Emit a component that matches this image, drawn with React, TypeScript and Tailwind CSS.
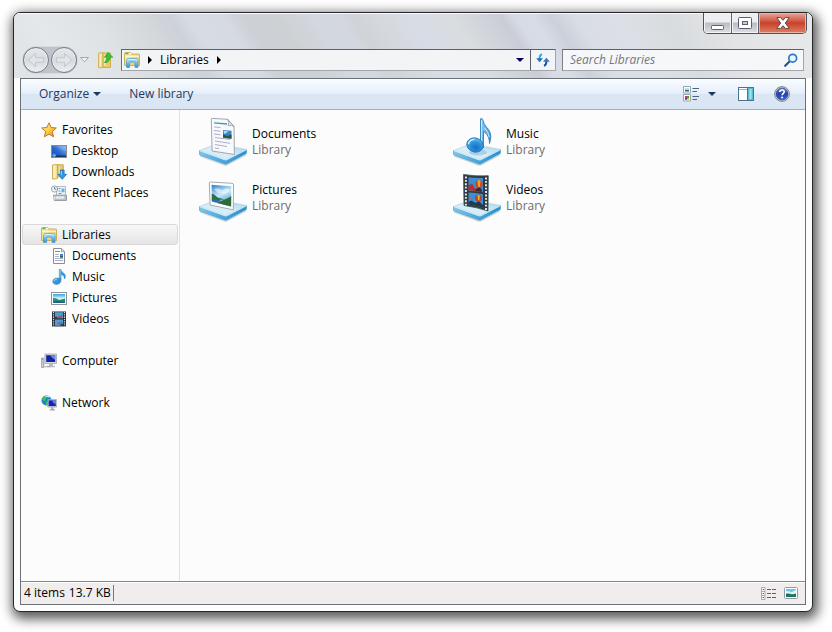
import type { ReactNode } from "react";

function LibrariesIcon() {
  return (
    <svg width="16" height="16" viewBox="0 0 16 16" aria-hidden="true">
      <defs>
        <linearGradient id="libFolder" x1="0" y1="0" x2="1" y2="1">
          <stop offset="0" stopColor="#f8efb4" />
          <stop offset="1" stopColor="#e3c763" />
        </linearGradient>
        <linearGradient id="libStand" x1="0" y1="0" x2="0" y2="1">
          <stop offset="0" stopColor="#b8e7fb" />
          <stop offset="1" stopColor="#2d95d2" />
        </linearGradient>
      </defs>
      <path d="M.5 13.5v-12q0-.9.9-.9h5.2l1 1.400h7q.9 0 .9.900v10.600z" fill="url(#libFolder)" stroke="#c3a245" strokeWidth=".8" />
      <path d="M1.400 1.500h3" stroke="#4dbb3c" strokeWidth="1.600" />
      <path d="M5 1.500h2" stroke="#fff" strokeWidth="1.200" />
      <path d="M1 4.300h14" stroke="#fffbe0" strokeWidth="1" />
      <path d="M2.500 15.400V9.200q0-2.700 2.700-2.700h6.100q2.700 0 2.700 2.700v6.200h-3v-4.100q0-1.300-1.300-1.300H6.900q-1.300 0-1.300 1.300v4.100z" fill="url(#libStand)" stroke="#4c9dca" strokeWidth=".8" />
      <path d="M3.400 9.200q0-1.800 1.900-1.800h6q1.800 0 1.800 1.800" fill="none" stroke="#e9f8ff" strokeWidth=".8" />
    </svg>
  );
}

function StarIcon() {
  return (
    <svg width="16" height="16" viewBox="0 0 16 16" aria-hidden="true">
      <defs>
        <linearGradient id="star" x1="0" y1="0" x2="1" y2="1">
          <stop offset="0" stopColor="#fffbc0" />
          <stop offset=".45" stopColor="#ffd548" />
          <stop offset="1" stopColor="#ef7f14" />
        </linearGradient>
      </defs>
      <path d="M8 .8l2.100 4.700 5.200.500-3.900 3.500 1.100 5.300L8 12 3.400 14.800l1.200-5.300L.7 6l5.200-.500z" fill="url(#star)" stroke="#b97637" strokeWidth="1" strokeLinejoin="round" />
    </svg>
  );
}

function DesktopIcon() {
  return (
    <svg width="16" height="16" viewBox="0 0 16 16" aria-hidden="true">
      <defs>
        <linearGradient id="desk" x1="0" y1="1" x2="1" y2="0">
          <stop offset="0" stopColor="#1746a3" />
          <stop offset=".45" stopColor="#2a66ce" />
          <stop offset="1" stopColor="#86bbf5" />
        </linearGradient>
      </defs>
      <rect x=".5" y="2.500" width="15" height="12" fill="url(#desk)" stroke="#868c96" />
      <path d="M1 12.500h14V14H1z" fill="#1d3563" />
      <path d="M6 3h9v5Q10 8 6 3z" fill="#fff" opacity=".15" />
      <circle cx="3" cy="12.300" r="1.800" fill="#45a5e5" />
      <path d="M2.200 11.500h1v1h-1z" fill="#ee6936" />
      <path d="M3.300 12.300h1v1h-1z" fill="#f7d644" />
    </svg>
  );
}

function DownloadsIcon() {
  return (
    <svg width="16" height="16" viewBox="0 0 16 16" aria-hidden="true">
      <path d="M1.500 1l5-.5v14l-5 .600z" fill="#efdc91" stroke="#c9af64" />
      <path d="M6.500 .8h5.800v12H6.500z" fill="#e5cb71" stroke="#c6a95a" />
      <path d="M3.500 1.500v12.500" stroke="#fbf2bd" strokeWidth="2" />
      <path d="M8.500 2v10" stroke="#f5e49e" />
      <path d="M9.400 6h3.700v4.300h2.400l-4.200 5-4.300-5h2.400z" fill="#2b9be9" stroke="#1b6db5" strokeWidth=".8" />
      <path d="M10.300 7v4" stroke="#9bd7fa" />
    </svg>
  );
}

function RecentIcon() {
  return (
    <svg width="16" height="16" viewBox="0 0 16 16" aria-hidden="true">
      <path d="M5.500 1.500h9v10h-9z" fill="#edf5fa" stroke="#b5bbbf" />
      <path d="M7.500 3.500h2M7.500 6h2M7.500 8.500h3" stroke="#7398b1" />
      <path d="M10.500 3.500h3v3.700h-3z" fill="#65b1df" />
      <path d="M2.500 10.200h13v5.200H3.300z" fill="#c1c5c8" stroke="#94999c" />
      <path d="M5 12.500h8" stroke="#edf0f2" strokeWidth="2" />
      <path d="M3 11.500l1 3" stroke="#f6f6f6" />
      <circle cx="3.600" cy="4" r="3.100" fill="#f5faff" stroke="#94a0aa" />
      <path d="M3.600 2v2.200h1.800" stroke="#4a5966" fill="none" strokeWidth=".8" />
    </svg>
  );
}

function DocumentIcon() {
  return (
    <svg width="16" height="16" viewBox="0 0 16 16" aria-hidden="true">
      <path d="M2.500.5h8.200l2.800 3v12h-11z" fill="#fff" stroke="#8c8f92" />
      <path d="M10.500.700v3h3" fill="#e8edf0" stroke="#9da0a2" />
      <path d="M4 3.500h5" stroke="#4c9aaa" />
      <path d="M4 6.500h4M4 8.500h4M4 10.500h8M4 12.500h8" stroke="#a9b0cc" />
      <path d="M9 6h3v3.500H9z" fill="#4387c6" />
      <path d="M9 8h3v1.500H9z" fill="#286452" />
    </svg>
  );
}

function MusicIcon() {
  return (
    <svg width="16" height="16" viewBox="0 0 16 16" aria-hidden="true">
      <defs>
        <linearGradient id="note" x1="0" y1="0" x2="1" y2="1">
          <stop offset="0" stopColor="#67bded" />
          <stop offset="1" stopColor="#1576bf" />
        </linearGradient>
      </defs>
      <path d="M8.300.400h1.400c.2 2.700 4.900 3.500 4.600 7.200q-.1 1.400-.8 2.300c.3-3-1.800-4-3.500-4.400v5.800c0 2.200-2 4.100-4.600 4.100-2.200 0-3.600-1.200-3.600-2.800C1.800 10.400 4 9 6.100 9q1.300 0 2.200.500z" fill="url(#note)" stroke="#267fb9" strokeWidth=".6" />
      <path d="M3 12q.7-2 3-2" fill="none" stroke="#a9e0fb" strokeWidth=".9" />
      <path d="M9 1v8" stroke="#b2dff5" strokeWidth=".7" />
    </svg>
  );
}

function PictureIcon() {
  return (
    <svg width="16" height="16" viewBox="0 0 16 16" aria-hidden="true">
      <defs>
        <linearGradient id="picSky" x1="0" y1="0" x2="0" y2="1">
          <stop offset="0" stopColor="#3b9fd8" />
          <stop offset=".5" stopColor="#d3f6fc" />
        </linearGradient>
      </defs>
      <rect x=".5" y="2.500" width="15" height="12" fill="#fff" stroke="#8d9499" />
      <path d="M2 4h12v9H2z" fill="url(#picSky)" />
      <path d="M2 8q4 0 6 2l6-1.500V13H2z" fill="#2c8d75" />
      <path d="M2 11.500q5-1 12 0V13H2z" fill="#1c628c" />
    </svg>
  );
}

function VideoIcon() {
  return (
    <svg width="16" height="16" viewBox="0 0 16 16" aria-hidden="true">
      <path d="M1 .5h14v15H1z" fill="#2a2d33" />
      <path d="M4 1.300h8v6H4zM4 8.500h8v6.200H4z" fill="#4d9edb" />
      <path d="M2.500 1v14.500M13.500 1v14.500" stroke="#d5dbe0" strokeWidth="1.200" strokeDasharray="1.300 1" />
      <path d="M7 5.500l1-1.300 1.200 1 2-2.300v3l-2 1.200H7.500zM6 12.500l1.500-1.200 1.500.8 2-2v2l-2 1.500z" fill="#b94d3d" />
      <path d="M4 7.300h3l-1-1.500H4zM12 14.700H9l1-1.500 2-.5z" fill="#213954" />
    </svg>
  );
}

function ComputerIcon() {
  return (
    <svg width="16" height="16" viewBox="0 0 16 16" aria-hidden="true">
      <path d="M.4 5h2.600v9.500H.400z" fill="#c4c7ca" stroke="#8b8f93" strokeWidth=".6" />
      <path d="M1 6.500h1" stroke="#56d13c" />
      <path d="M4 1h11.500v9.500H4z" fill="#d9dadc" stroke="#a2a5a9" strokeWidth=".8" />
      <path d="M5.200 2.200h9v6.800h-9z" fill="#1422a6" />
      <path d="M9 2.200h5.200V7Q12 6 9 2.200z" fill="#6b88e5" />
      <path d="M8 10.700h4v2h2v1.600H6v-1.600h2z" fill="#b9bcc0" />
      <path d="M3.500 13.700h6" stroke="#a7aaae" />
    </svg>
  );
}

function NetworkIcon() {
  return (
    <svg width="16" height="16" viewBox="0 0 16 16" aria-hidden="true">
      <circle cx="5.500" cy="5.500" r="5" fill="#2081cb" />
      <path d="M1 4Q2 .8 6 .700l1.600 1.600-2.400.8-.8 2.200-2 1zM5.500 6.500l2 .8-1.700 3H4.500z" fill="#43c443" />
      <path d="M4.500 1.500q2-1 4 .700" stroke="#c8f2fb" strokeWidth="1.200" fill="none" />
      <path d="M6.800 4.500h8.800v7.600H6.800z" fill="#d3d5d9" stroke="#969ca3" strokeWidth=".6" />
      <path d="M7.600 5.300h7.200v5.800H7.600z" fill="#1526b2" />
      <path d="M11 5.300h3.800v4Q12 8.500 11 5.300z" fill="#6889e9" />
      <path d="M10.200 12.200h2.200v2h1.600v1.300H8.700v-1.300h1.500z" fill="#a3a8ae" />
    </svg>
  );
}

function Tray() {
  return (
    <>
      <defs>
        <linearGradient id="trayTop" x1="0" y1="1" x2="1" y2="0">
          <stop offset="0" stopColor="#cfe8f5" />
          <stop offset=".5" stopColor="#d9eef8" />
          <stop offset="1" stopColor="#a3d0ea" />
        </linearGradient>
        <linearGradient id="traySide" x1="0" y1="0" x2="1" y2="0">
          <stop offset="0" stopColor="#7fc4e8" />
          <stop offset=".5" stopColor="#48a6db" />
          <stop offset="1" stopColor="#2b8fce" />
        </linearGradient>
      </defs>
      <path d="M1.500 38L26.500 47.500 47 37" stroke="#666" strokeWidth="1.400" opacity=".22" fill="none" />
      <path d="M.5 32.500v3.800q0 .6.700.900L26 46.200q1 .3 1.900-.1L47 35.800q.5-.3.500-.900V31.500L27 40z" fill="url(#traySide)" stroke="#4b9fcd" strokeWidth=".6" />
      <path d="M.5 32.500L18 26l29.500 5.500L27.800 41.600q-.9.400-1.800.100z" fill="url(#trayTop)" stroke="#9fcde6" strokeWidth=".6" />
      <path d="M1 32.800l25 9.100q.9.300 1.800-.1L47.200 31.900" stroke="#f1fbff" strokeWidth=".7" fill="none" />
    </>
  );
}

function BigDocument() {
  return (
    <svg width="48" height="48" viewBox="0 0 48 48" aria-hidden="true">
      <Tray />
      <path d="M12.300 1.200q-.2-.8.800-.8l15.500.900 6.400 7 .4 28.200-22.300-3.500z" fill="#f8f9fd" stroke="#999ca5" strokeWidth=".9" />
      <path d="M28.600 1.300q2 3.500.5 6.200 4-.6 5.900 1z" fill="#e3e6eb" stroke="#8b9099" strokeWidth=".7" />
      <path d="M15 4.800l13 1.200" stroke="#3e9fa2" strokeWidth="1.300" />
      <path d="M15 9l6.500.5M15 12.500l6.500.700M15 16l6.500.8M16 19.500l15 2M16 23l15 2.300M16 26.500l12 2M16 30l4 .7" stroke="#a5a6bf" strokeWidth=".9" />
      <path d="M24 12l8.500.700v8l-8.500-1z" fill="#3a84c8" />
      <path d="M24 16l4 2 4.500-1.500v4.200l-8.500-1z" fill="#285b46" />
      <path d="M24.500 12.700l5 .5-4 3z" fill="#a8def6" />
    </svg>
  );
}

function BigPicture() {
  return (
    <svg width="48" height="48" viewBox="0 0 48 48" aria-hidden="true">
      <defs>
        <linearGradient id="bigSky" x1="0" y1="0" x2=".4" y2="1">
          <stop offset="0" stopColor="#2f80cf" />
          <stop offset=".55" stopColor="#c9eafa" />
          <stop offset="1" stopColor="#4ba0d2" />
        </linearGradient>
      </defs>
      <Tray />
      <path d="M10.300 9q-.1-1 1-1L33 9.300q1.500.2 1.500 1.500l-.2 25-23.200-4.800z" fill="#fff" stroke="#9aa0a8" strokeWidth=".9" />
      <path d="M12.500 10.800l19.800 1.400-.2 20.300-19-4.500z" fill="url(#bigSky)" />
      <path d="M12.700 19.500q2.500.8 6 3.900l7 2.200-13 1z" fill="#2e704e" />
      <path d="M12.800 25l9 1-3 2.500-5.900-1z" fill="#276d9e" />
      <path d="M32.200 22q-3 2.500-7.500 4l-7 2.700 14.400 3.800z" fill="#306b36" />
      <path d="M15 15q4-2 8 1l5-2 3 2-5 4-7-1z" fill="#fff" opacity=".5" />
    </svg>
  );
}

function BigMusic() {
  return (
    <svg width="48" height="48" viewBox="0 0 48 48" aria-hidden="true">
      <defs>
        <radialGradient id="bigNote" cx=".6" cy=".65" r=".75">
          <stop offset="0" stopColor="#156fc3" />
          <stop offset=".5" stopColor="#2d94db" />
          <stop offset="1" stopColor="#8accf4" />
        </radialGradient>
        <linearGradient id="bigStem" x1="0" y1="0" x2="1" y2="1">
          <stop offset="0" stopColor="#8bcbf0" />
          <stop offset="1" stopColor="#3a93d6" />
        </linearGradient>
      </defs>
      <Tray />
      <ellipse cx="25" cy="34.500" rx="9" ry="3" fill="#5a98c5" opacity=".35" />
      <path d="M27.500.800q2-.7 2.300 1 .8 4.500 4 7.700c4.700 5 4.700 9.500 2.700 16 0-6-2.500-10-6-12v16q-1.300 2-3 2z" fill="url(#bigStem)" stroke="#327fb9" strokeWidth=".9" />
      <path d="M28.600 2v26M31.500 10q4 4 4.500 9" stroke="#cdecfc" strokeWidth="1" fill="none" />
      <ellipse cx="22" cy="27" rx="8.300" ry="7" fill="url(#bigNote)" stroke="#2478b9" strokeWidth=".9" transform="rotate(18 22 27)" />
      <path d="M15.500 26q1-4.500 6-4.600" stroke="#d5f1ff" strokeWidth="1.300" fill="none" />
    </svg>
  );
}

function BigVideo() {
  return (
    <svg width="48" height="48" viewBox="0 0 48 48" aria-hidden="true">
      <Tray />
      <path d="M10.500.500q12 2 24.800 1.200l-.3 35.300q-12-4-24-5.500z" fill="#34383e" stroke="#2b5a5c" strokeWidth=".8" />
      <path d="M15.500 3.300q7.500 1 14.500.600v14.300q-7-1.200-14.500-1.200zM15.500 18.500q7 .2 14.500 1.700v13.500q-7-2.200-14.500-3.200z" fill="#3c8ed5" />
      <path d="M12.900 2.500v29M33 3.500v33" stroke="#e5eef1" strokeWidth="1.900" strokeDasharray="1.900 1.500" />
      <circle cx="26" cy="10" r="3.700" fill="#c94729" />
      <path d="M24.500 7q1.500-2 3 0l-.6 6h-1.600z" fill="#f0a52a" />
      <path d="M15.500 10l2 1 1.500-1.500 2.500 4v3.300l-6-.2zM21 15l4-1 1 3.500-6-.5z" fill="#b92e2b" />
      <path d="M22 17q2-4 4.500-3.500t2.500 4.500z" fill="#3b2b39" />
      <circle cx="25.500" cy="24" r="3.300" fill="#b93f28" />
      <path d="M24.500 21.500q1.500-1 2.300 0l-.4 5-1.400-.2z" fill="#f1b232" />
      <path d="M15.500 28q3-2.500 5 0 3 2 5-1l4.500 4v2.700q-7-2.200-14.500-3.200z" fill="#22394c" />
      <path d="M18 22.500l1.500 1-1 2-1.500-1z" fill="#d8612b" />
    </svg>
  );
}

function UpFolderIcon() {
  return (
    <svg width="17" height="18" viewBox="0 0 17 18" aria-hidden="true">
      <path d="M1.500 2.200L6 1.500v15l-4.500.4z" fill="#f0dc8b" stroke="#d3b662" />
      <path d="M6 2h7.500v14.500H6z" fill="#e9cc6a" stroke="#cdae55" />
      <path d="M3.500 3v12M8 3.500v11" stroke="#fbf1ba" strokeWidth="1.300" />
      <path d="M11 1.500l4.800 4.700h-2.300q-.5 3.500-3.500 5.300H7.500q2.300-2 2.500-5.300H7.500z" fill="#37c42c" stroke="#2a9a30" strokeWidth=".7" />
    </svg>
  );
}

function NavCircle({ label, d }: { label: string; d: string }) {
  return (
    <button
      type="button"
      aria-label={label}
      className="size-[26px] shrink-0 rounded-full border border-[#777e88] bg-linear-to-b from-[#e6e8eb] via-[#d6dadf] to-[#eaf0f4] shadow-[inset_0_0_0_1px_#eceef0]"
    >
      <svg viewBox="0 0 24 24" className="size-full" aria-hidden="true">
        <path d={d} fill="#e3e6e9" stroke="#c2c7cd" strokeWidth="1" strokeLinejoin="round" />
      </svg>
    </button>
  );
}

function NavCircles() {
  return (
    <div className="flex shrink-0 gap-[2px] rounded-full bg-[#bfc4cb] shadow-[0_0_1px_#6e747d]">
      <NavCircle label="Back" d="M4.500 12l7-6.500v4.300h8v4.400h-8v4.300z" />
      <NavCircle label="Forward" d="M19.500 12l-7-6.500v4.300h-8v4.400h8v4.300z" />
    </div>
  );
}

function Triangle({ className, color }: { className: string; color: string }) {
  return (
    <svg viewBox="0 0 8 4" className={className} aria-hidden="true">
      <path d="M0 0h8L4 4z" fill={color} />
    </svg>
  );
}

function RightArrow() {
  return (
    <svg width="4" height="8" viewBox="0 0 4 8" aria-hidden="true">
      <path d="M0 0l4 4-4 4z" fill="#000" />
    </svg>
  );
}

function CaptionButtons() {
  const plain =
    "flex shrink-0 items-center justify-center border-r border-[#5d626b] bg-linear-to-b from-[#eceef0] from-45% via-[#b9bdc4] via-50% to-[#dcdfe3] shadow-[inset_0_0_0_1px_#f3f4f6]";
  return (
    <div className="mr-[5px] ml-auto flex h-[21px] w-[104px] overflow-hidden rounded-b-[5px] border border-t-0 border-[#4f545c]">
      <button type="button" aria-label="Minimize" className={`${plain} w-7`}>
        <svg width="14" height="15" viewBox="0 0 14 15" aria-hidden="true">
          <rect x=".5" y="9.500" width="12" height="4" rx=".8" fill="#fff" stroke="#5b5e6d" />
        </svg>
      </button>
      <button type="button" aria-label="Maximize" className={`${plain} w-[27px]`}>
        <svg width="14" height="12" viewBox="0 0 14 12" aria-hidden="true">
          <rect x=".5" y=".5" width="13" height="11" rx="1" fill="#fff" stroke="#5b5e6d" />
          <rect x="4.500" y="4.500" width="5" height="3" fill="#c8ccd3" stroke="#5b5e6d" />
        </svg>
      </button>
      <button
        type="button"
        aria-label="Close"
        className="flex grow items-center justify-center bg-linear-to-b from-[#e3a79c] from-0% via-[#c9402a] via-50% to-[#de7f63] shadow-[inset_0_0_0_1px_#e9b3a6]"
      >
        <svg width="14" height="12" viewBox="0 0 14 12" aria-hidden="true">
          <path d="M.8.600h3.900L7 3.300 9.300.600h3.900L9.300 6l4 5.400h-4L7 8.700l-2.300 2.700h-4l4-5.400z" fill="#fff" stroke="#5f4850" strokeWidth="1" strokeLinejoin="round" />
        </svg>
      </button>
    </div>
  );
}

function AddressRow() {
  return (
    <div className="mt-[13px] flex items-center pr-2 pl-[9px]">
      <NavCircles />
      <button type="button" aria-label="Recent pages" className="ml-[2px] flex w-[11px] shrink-0 justify-center">
        <svg width="9" height="6" viewBox="0 0 9 6" aria-hidden="true">
          <path d="M.5.500h8l-4 4.500z" fill="#f2f3f4" stroke="#a2a7ae" />
        </svg>
      </button>
      <button type="button" aria-label="Up" className="ml-[7px] shrink-0">
        <UpFolderIcon />
      </button>
      <nav
        aria-label="Address"
        className="ml-[7px] flex h-[22px] min-w-0 flex-1 items-center border border-[#a2a5aa] border-t-[#5d6065] border-l-[#6d7075] bg-[#f3f4f5] pl-[2px]"
      >
        <LibrariesIcon />
        <span className="ml-2 flex items-center gap-2">
          <RightArrow />
          <a href="#libraries" className="text-black">Libraries</a>
          <RightArrow />
        </span>
        <button type="button" aria-label="Previous locations" className="ml-auto flex h-full w-5 items-center justify-center">
          <Triangle className="h-1 w-2" color="#00005e" />
        </button>
        <button type="button" aria-label="Refresh" className="flex h-full w-[25px] items-center justify-center border-l border-[#5d6065]">
          <svg width="14" height="14" viewBox="0 0 14 14" aria-hidden="true">
            <path d="M6 1.200Q3.500 1.800 3.600 6" stroke="#31a9df" strokeWidth="2" fill="none" />
            <path d="M.200 5.200h6.800L3.600 9.200z" fill="#2a6dc3" />
            <path d="M8 12.800q2.500-.8 2.400-5" stroke="#1f4d9b" strokeWidth="2" fill="none" />
            <path d="M7 8.800h6.800l-3.400-4z" fill="#2f77c9" />
          </svg>
        </button>
      </nav>
      <label className="ml-[6px] flex h-[22px] w-[242px] shrink items-center border border-[#a2a5aa] border-t-[#5d6065] border-l-[#7d8085] bg-[#f6f7f8] pr-[5px] pl-[7px]">
        <input
          type="search"
          aria-label="Search Libraries"
          placeholder="Search Libraries"
          className="min-w-0 flex-1 bg-transparent italic outline-none placeholder:text-[#75777a]"
        />
        <svg width="14" height="14" viewBox="0 0 14 14" aria-hidden="true">
          <path d="M1.200 12.800L5.500 8.500" stroke="#23539f" strokeWidth="2.200" strokeLinecap="round" />
          <circle cx="8.700" cy="5.200" r="3.900" fill="#eaf6fd" stroke="#2f78c3" strokeWidth="1.700" />
        </svg>
      </label>
    </div>
  );
}

function Toolbar() {
  return (
    <div
      role="toolbar"
      aria-label="Folder commands"
      className="flex h-[31px] items-center border-b border-[#9fb1ca] bg-linear-to-b from-[#fafdff] from-0% via-[#e5effa] via-48% to-[#dae6f4] to-50% pr-[15px] pl-[18px] text-[#1e395b] shadow-[inset_0_1px_0_#fff]"
    >
      <button type="button" className="flex items-center gap-1">
        Organize
        <Triangle className="h-1 w-2" color="#1e395b" />
      </button>
      <button type="button" className="ml-7">New library</button>
      <button type="button" aria-label="Change your view" className="ml-auto">
        <svg width="17" height="16" viewBox="0 0 17 16" aria-hidden="true">
          <path d="M.5.500h7v6.500h-7zM.5 8.500h7V15h-7z" fill="#fff" stroke="#9ba5b2" />
          <path d="M2 2.200h4V4H2z" fill="#9adff0" />
          <path d="M2 4h4v1.500H2z" fill="#1d716d" />
          <path d="M2 10h2v2H2z" fill="#d43d37" />
          <path d="M4 10h2v2H4z" fill="#3e9d38" />
          <path d="M2 12h2v1.700H2z" fill="#2d4da8" />
          <path d="M4 12h2v1.700H4z" fill="#e0b520" />
          <path d="M9.500 2.500H16M9.500 5.500h4.500M9.500 10.500H16M9.500 13.500h4.500" stroke="#4d6480" />
        </svg>
      </button>
      <button type="button" aria-label="More views" className="ml-2">
        <Triangle className="h-1 w-2" color="#1e395b" />
      </button>
      <button type="button" aria-label="Preview pane" className="ml-[22px]">
        <svg width="16" height="14" viewBox="0 0 16 14" aria-hidden="true">
          <rect x=".5" y=".5" width="15" height="13" fill="#fff" stroke="#4f7291" />
          <path d="M1 2.500h9" stroke="#9db5ca" />
          <path d="M10 1h5v12h-5z" fill="#59bed5" />
          <path d="M9.500 .5v13" stroke="#4f7291" />
          <path d="M12.500 2v10" stroke="#a9e5ed" strokeWidth="2" />
        </svg>
      </button>
      <button type="button" aria-label="Get help" className="ml-5">
        <svg width="16" height="16" viewBox="0 0 16 16" aria-hidden="true">
          <defs>
            <linearGradient id="help" x1="0" y1="0" x2="0" y2="1">
              <stop offset="0" stopColor="#6b86da" />
              <stop offset=".5" stopColor="#2040ae" />
              <stop offset="1" stopColor="#3c66cd" />
            </linearGradient>
          </defs>
          <circle cx="8" cy="8" r="7.400" fill="#d6d8dd" stroke="#80848c" strokeWidth="1" />
          <circle cx="8" cy="8" r="6" fill="url(#help)" stroke="#283e84" strokeWidth=".6" />
          <path d="M5.800 6q.2-2 2.300-2t2.200 1.800c0 1.500-2.200 1.600-2.200 3.400" fill="none" stroke="#fff" strokeWidth="1.600" />
          <circle cx="8.100" cy="11.400" r="1" fill="#fff" />
        </svg>
      </button>
    </div>
  );
}

function TreeRow({ icon, label, child, selected }: { icon: ReactNode; label: string; child?: boolean; selected?: boolean }) {
  return (
    <a
      href={`#${label.toLowerCase().replace(" ", "-")}`}
      aria-current={selected ? "page" : undefined}
      className={`mx-px flex h-[21px] items-center gap-[5px] rounded-[3px] border ${child ? "pl-7" : "pl-[18px]"} ${
        selected ? "border-[#d9d9d9] bg-linear-to-b from-[#f8f8f8] to-[#e5e5e5]" : "border-transparent"
      }`}
    >
      {icon}
      {label}
    </a>
  );
}

function Sidebar() {
  return (
    <nav aria-label="Navigation pane" className="flex w-[159px] shrink-0 flex-col gap-[21px] border-r border-[#d9e3f1] pt-[9px]">
      <div>
        <TreeRow icon={<StarIcon />} label="Favorites" />
        <TreeRow child icon={<DesktopIcon />} label="Desktop" />
        <TreeRow child icon={<DownloadsIcon />} label="Downloads" />
        <TreeRow child icon={<RecentIcon />} label="Recent Places" />
      </div>
      <div>
        <TreeRow selected icon={<LibrariesIcon />} label="Libraries" />
        <TreeRow child icon={<DocumentIcon />} label="Documents" />
        <TreeRow child icon={<MusicIcon />} label="Music" />
        <TreeRow child icon={<PictureIcon />} label="Pictures" />
        <TreeRow child icon={<VideoIcon />} label="Videos" />
      </div>
      <TreeRow icon={<ComputerIcon />} label="Computer" />
      <TreeRow icon={<NetworkIcon />} label="Network" />
    </nav>
  );
}

const libraries = [
  { name: "Documents", icon: <BigDocument /> },
  { name: "Music", icon: <BigMusic /> },
  { name: "Pictures", icon: <BigPicture /> },
  { name: "Videos", icon: <BigVideo /> },
];

function LibraryGrid() {
  return (
    <main className="grid min-w-0 flex-1 grid-cols-[repeat(auto-fill,254px)] content-start gap-y-2 pt-2 pl-[19px]">
      {libraries.map((lib) => (
        <a key={lib.name} href={`#${lib.name.toLowerCase()}-library`} className="flex h-12 items-center gap-[5px]">
          {lib.icon}
          <span className="flex flex-col">
            <span>{lib.name}</span>
            <span className="text-[#6d6d6d]">Library</span>
          </span>
        </a>
      ))}
    </main>
  );
}

function StatusBar() {
  return (
    <footer className="flex h-[23px] items-center border-t border-[#84878b] bg-[#f1edec] pr-[7px] pl-[3px] shadow-[inset_0_1px_0_#fff]">
      <span className="flex gap-1 border-r border-[#77797c] pr-[2px]">
        <span>4 items</span>
        <span>13.7 KB</span>
      </span>
      <button type="button" aria-label="Details view" className="ml-auto">
        <svg width="15" height="13" viewBox="0 0 15 13" aria-hidden="true">
          <path d="M.5.500h3.500v12H.500zM.500 4.500H4M.500 8.500H4" fill="#fff" stroke="#a5acb6" />
          <path d="M1.600 2.500h1.400M1.600 10.500h1.400" stroke="#356baf" />
          <path d="M1.600 6.500h1.400" stroke="#d2342a" />
          <path d="M6 2.500h4M11 2.500h4M6 6.500h4M11 6.500h4M6 10.500h4M11 10.500h4" stroke="#4d6484" />
        </svg>
      </button>
      <button type="button" aria-label="Thumbnails view" className="ml-2">
        <svg width="14" height="12" viewBox="0 0 14 12" aria-hidden="true">
          <rect x=".5" y=".5" width="13" height="11" rx="1" fill="#fff" stroke="#8e9bb0" />
          <path d="M2 2h10v8H2z" fill="#70c3eb" />
          <path d="M2 4q4 0 5 1.500L12 3v4H2z" fill="#e0f8fb" />
          <path d="M2 6.500q4-.500 6 1l4-1V10H2z" fill="#237455" />
        </svg>
      </button>
    </footer>
  );
}

export default function App() {
  return (
    <div className="flex min-h-screen bg-white pt-3 pr-[19px] pb-5 pl-[13px] font-['Open_Sans','Noto_Sans',sans-serif] text-[12px] leading-4 text-black">
      <div className="flex min-w-0 flex-1 flex-col overflow-hidden rounded-[7px] border border-[#25272a] bg-[#fdfdfd] shadow-[2px_4px_12px_3px_rgba(0,0,0,0.65)]">
        <header className="h-[65px] shrink-0 bg-[linear-gradient(57deg,#dfe2e6_0px,#e5e8ea_50px,#dfe2e4_100px,#d4d8db_141px,#cdd1d9_163px,#d6dbe4_178px,#d6dae3_208px,#cdd0d4_225px,#ced1d4_255px,#d3d7df_285px,#d3d7df_305px,#d0d4d8_318px,#d5d9dd_340px,#d8dce6_365px,#d9dde0_400px,#cacdd6_442px,#d7dbe5_454px,#d8dce7_468px,#ccd0d9_484px,#d9dde6_504px,#dcdfe6_540px,#d9dcde_580px,#e2e4e6_625px,#e5e7e9_680px)] shadow-[inset_0_1px_0_#fafbfc]">
          <CaptionButtons />
          <AddressRow />
        </header>
        <div className="mx-[6px] mb-[6px] flex grow flex-col border border-[#6c7178] bg-[#fcfcfc]">
          <Toolbar />
          <div className="flex grow">
            <Sidebar />
            <LibraryGrid />
          </div>
          <StatusBar />
        </div>
      </div>
    </div>
  );
}
